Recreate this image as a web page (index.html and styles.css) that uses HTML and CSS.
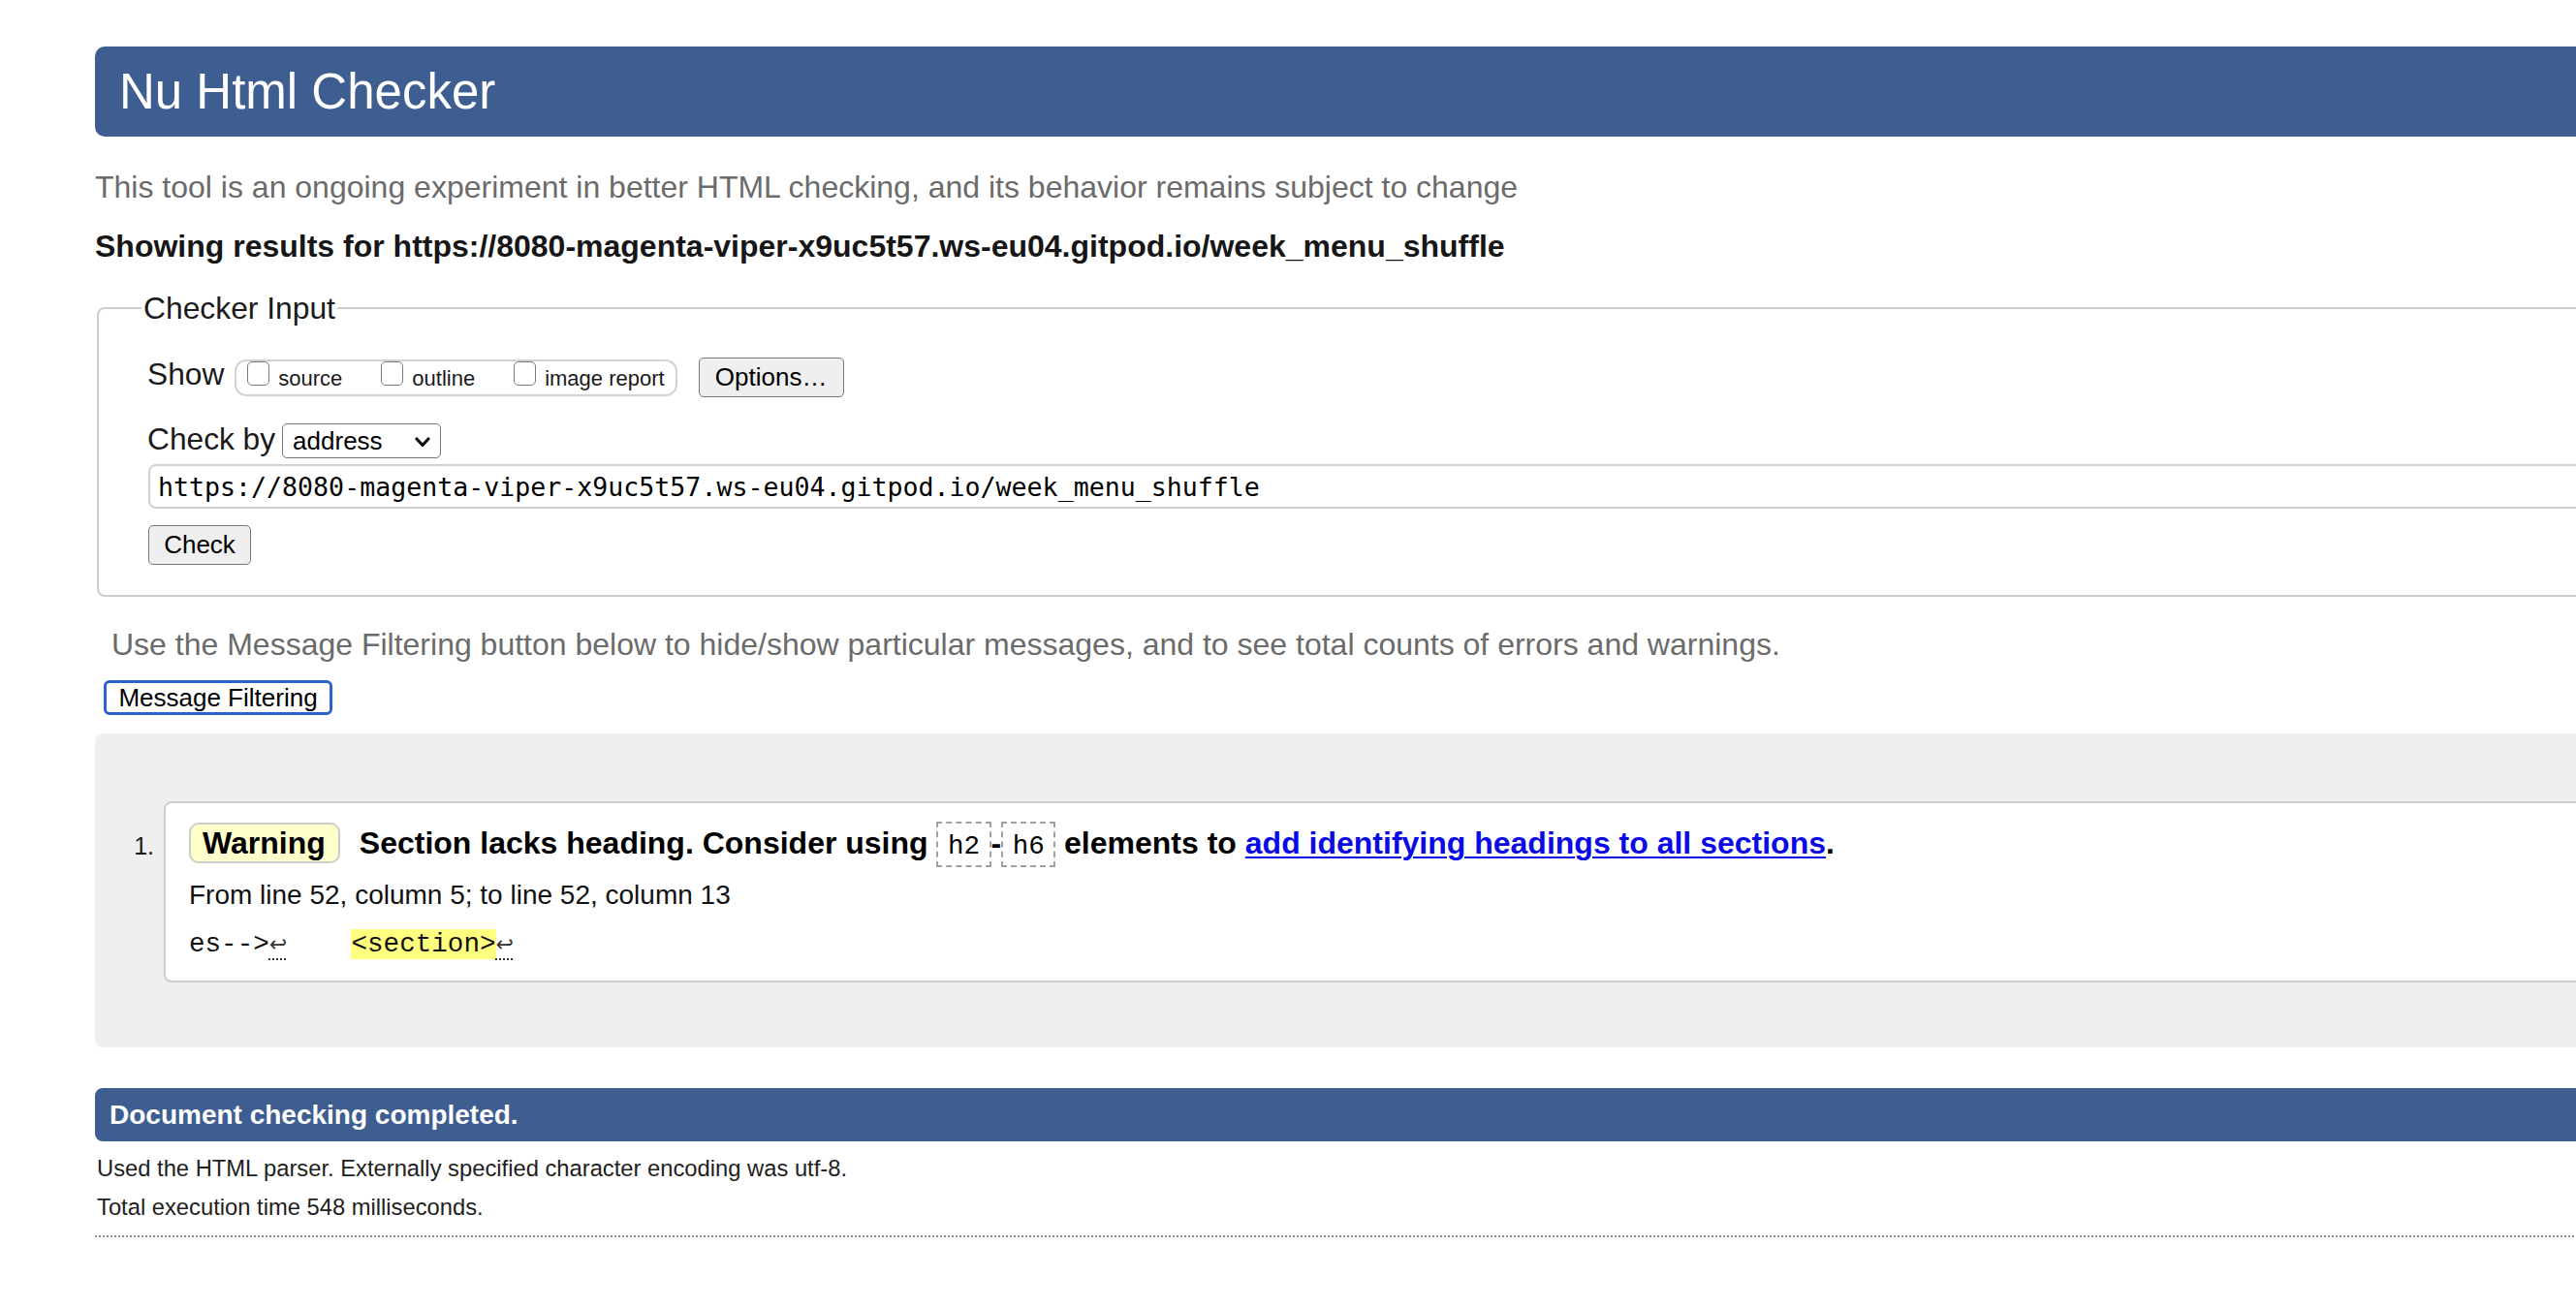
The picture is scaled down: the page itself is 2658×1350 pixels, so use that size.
FILE: index.html
```html
<!DOCTYPE html>
<html lang="en">
<head>
<meta charset="utf-8">
<title>Nu Html Checker</title>
<link rel="stylesheet" href="styles.css">
</head>
<body>
<div class="page">
  <h1 class="title">Nu Html Checker</h1>
  <p class="intro">This tool is an ongoing experiment in better HTML checking, and its behavior remains subject to change</p>
  <p class="showing">Showing results for https://8080-magenta-viper-x9uc5t57.ws-eu04.gitpod.io/week_menu_shuffle</p>

  <fieldset class="checker">
    <legend class="legend">Checker Input</legend>
    <div class="show-row">
      <span class="row-label show-label">Show</span>
      <div class="opts">
        <label class="opt"><input type="checkbox" class="cb"><span class="opt-text">source</span></label>
        <label class="opt"><input type="checkbox" class="cb"><span class="opt-text">outline</span></label>
        <label class="opt"><input type="checkbox" class="cb"><span class="opt-text">image report</span></label>
      </div>
      <button class="btn options-btn" type="button">Options…</button>
    </div>
    <div class="checkby-row">
      <span class="row-label checkby-label">Check by</span>
      <div class="select">
        <span class="select-text">address</span>
        <svg class="chevron" width="16" height="11" viewBox="0 0 16 11"><path d="M2 2 L8 8.5 L14 2" fill="none" stroke="#111" stroke-width="3.2" stroke-linecap="round" stroke-linejoin="round"/></svg>
      </div>
    </div>
    <input class="url-input" type="text" value="https://8080-magenta-viper-x9uc5t57.ws-eu04.gitpod.io/week_menu_shuffle">
    <button class="btn check-btn" type="button">Check</button>
  </fieldset>

  <p class="filter-note">Use the Message Filtering button below to hide/show particular messages, and to see total counts of errors and warnings.</p>
  <button class="mf-btn" type="button">Message Filtering</button>

  <div class="results">
    <div class="msg-row">
      <div class="msg-num">1.</div>
      <div class="msg-box">
        <p class="msg-line"><span class="badge">Warning</span><span class="msg-text">Section lacks heading. Consider using <code class="tag">h2</code>-<code class="tag">h6</code> elements to <a class="msg-link" href="#">add identifying headings to all sections</a>.</span></p>
        <p class="location">From line 52, column 5; to line 52, column 13</p>
        <p class="extract">es--&gt;<span class="lf">↩</span>    <mark class="hl">&lt;section&gt;</mark><span class="lf">↩</span></p>
      </div>
    </div>
  </div>

  <h2 class="done-bar">Document checking completed.</h2>
  <p class="stat stat-first">Used the HTML parser. Externally specified character encoding was utf-8.</p>
  <p class="stat">Total execution time 548 milliseconds.</p>
  <hr class="dotted-rule">
</div>
</body>
</html>
```

FILE: styles.css
```css
html {
  overflow: hidden;
  background: #ffffff;
}

body {
  margin: 0;
  width: 2900px;
  font-family: "Liberation Sans", Arial, sans-serif;
  color: #000;
}

.page {
  padding: 48px 0 0 98px;
}

.title {
  margin: 0;
  height: 93px;
  line-height: 93px;
  padding-left: 25px;
  background: #3e5d91;
  color: #fff;
  font-size: 51px;
  font-weight: normal;
  border-radius: 10px 0 0 10px;
}

.intro {
  margin: 33px 0 0;
  font-size: 32px;
  line-height: 38px;
  color: #6b6b6b;
}

.showing {
  margin: 23px 0 0;
  font-size: 32px;
  line-height: 38px;
  font-weight: bold;
  color: #161616;
}

.checker {
  margin: 26px 0 0 2px;
  border: 2px solid #cdcdcd;
  border-radius: 8px;
  padding: 32px 0 31px 50px;
  min-width: 0;
}

.legend {
  padding: 0 2px;
  margin-left: -6px;
  font-size: 31.8px;
  line-height: 38px;
  color: #1a1a1a;
}

.show-row {
  display: flex;
  align-items: center;
  height: 41px;
}

.row-label {
  font-size: 31.7px;
  line-height: 38px;
  color: #1a1a1a;
}

.show-label {
  margin-bottom: 7px;
}

.opts {
  box-sizing: border-box;
  height: 38px;
  margin-left: 11px;
  padding: 0 11px;
  display: flex;
  align-items: flex-start;
  gap: 40px;
  border: 2px solid #d2d2d2;
  border-radius: 12px;
}

.opt {
  display: flex;
  align-items: flex-start;
}

.cb {
  appearance: none;
  -webkit-appearance: none;
  box-sizing: border-box;
  width: 23px;
  height: 25px;
  margin: 0 9px 0 0;
  border: 1.5px solid #7a7a7a;
  border-radius: 5px;
  background: #fff;
}

.opt-text {
  margin-top: 5px;
  font-size: 22px;
  line-height: 26px;
  color: #1a1a1a;
}

.btn {
  box-sizing: border-box;
  font-family: "Liberation Sans", Arial, sans-serif;
  font-size: 26px;
  color: #000;
  background: #efefef;
  border: 1.5px solid #767676;
  border-radius: 5px;
  padding: 0;
}

.options-btn {
  margin-left: 22px;
  width: 150px;
  height: 41px;
}

.checkby-row {
  display: flex;
  align-items: center;
  height: 36px;
  margin-top: 27px;
}

.checkby-label {
  margin-bottom: 4px;
}

.select {
  box-sizing: border-box;
  margin-left: 7px;
  width: 164px;
  height: 36px;
  display: flex;
  align-items: center;
  justify-content: space-between;
  padding: 0 10px 0 10px;
  border: 1.5px solid #767676;
  border-radius: 5px;
  background: #fff;
  font-size: 26px;
  color: #000;
}

.chevron {
  display: block;
  margin-top: 2px;
}

.url-input {
  display: block;
  box-sizing: border-box;
  margin: 6px 0 0 1px;
  width: 2700px;
  height: 46px;
  padding: 0 8px;
  border: 2px solid #d0d0d0;
  border-radius: 8px;
  background: #fff;
  font-family: "DejaVu Sans Mono", "Liberation Mono", monospace;
  font-size: 26.6px;
  color: #000;
  outline: none;
}

.check-btn {
  display: block;
  margin: 17px 0 0 1px;
  width: 106px;
  height: 41px;
}

.filter-note {
  margin: 30px 0 0;
  padding-left: 17px;
  font-size: 32px;
  line-height: 38px;
  color: #6b6b6b;
}

.mf-btn {
  display: block;
  box-sizing: border-box;
  margin: 18px 0 0 9px;
  width: 236px;
  height: 36px;
  padding: 0;
  border: 3px solid #2b62cf;
  border-radius: 6px;
  background: #fff;
  font-family: "Liberation Sans", Arial, sans-serif;
  font-size: 26px;
  color: #000;
}

.results {
  margin-top: 19px;
  padding: 70px 0 67px;
  background: #efefef;
  border-radius: 8px 0 0 8px;
}

.msg-row {
  display: flex;
  align-items: flex-start;
}

.msg-num {
  box-sizing: border-box;
  width: 71px;
  padding: 31px 10px 0 0;
  text-align: right;
  font-size: 25px;
  line-height: 30px;
  color: #1a1a1a;
}

.msg-box {
  flex: 1;
  padding: 20px 0 19.5px 24px;
  border: 2px solid #cfcfcf;
  border-radius: 8px;
  background: #fff;
}

.msg-line {
  margin: 0;
  font-size: 32px;
  line-height: 42px;
  font-weight: bold;
  white-space: nowrap;
}

.badge {
  padding: 1.3px 13px 1.3px 12px;
  margin-right: 20px;
  border: 2px solid #cccccc;
  border-radius: 10px;
  background: #ffffcc;
}

.tag {
  padding: 8px 9.5px 4px;
  border: 2px dashed #a0a0a0;
  font-family: "Liberation Mono", "Courier New", monospace;
  font-size: 27.5px;
  font-weight: normal;
  line-height: 0;
}

.msg-link {
  color: #0a0ae6;
  text-decoration: underline;
  text-decoration-thickness: 2px;
  text-underline-offset: 3px;
}

.location {
  margin: 14.5px 0 0;
  font-size: 28px;
  line-height: 36px;
  color: #111;
}

.extract {
  margin: 15px 0 0;
  font-family: "Liberation Mono", "Courier New", monospace;
  font-size: 27.6px;
  line-height: 36px;
  white-space: pre;
  color: #111;
}

.hl {
  background: #ffff80;
  color: #111;
}

.lf {
  font-family: "DejaVu Sans", sans-serif;
  font-size: 22px;
  line-height: 0;
  color: #333;
  text-decoration: underline dotted 2px;
  text-underline-offset: 8px;
  text-decoration-color: #333;
}

.done-bar {
  margin: 42px 0 0;
  height: 55px;
  line-height: 55px;
  padding-left: 15px;
  background: #3e5d91;
  color: #fff;
  font-size: 28px;
  font-weight: bold;
  border-radius: 8px 0 0 8px;
}

.stat {
  margin: 10px 0 0 2px;
  font-size: 23.75px;
  line-height: 30px;
  color: #1e1e1e;
}

.stat-first {
  margin-top: 13px;
}

.dotted-rule {
  margin: 14px 0 0;
  height: 0;
  border: 0;
  border-top: 2px dotted #8a8a8a;
}
```
